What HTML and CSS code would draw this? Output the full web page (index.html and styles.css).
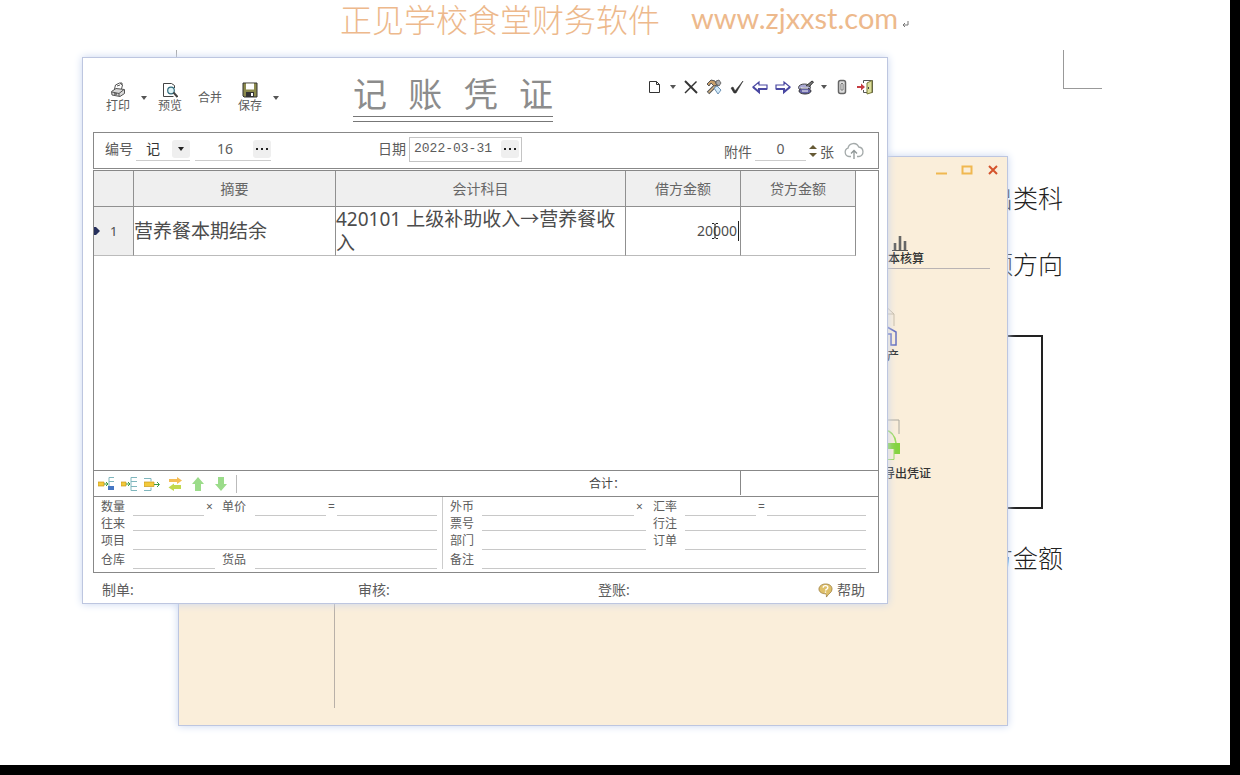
FILE: index.html
```html
<!DOCTYPE html>
<html lang="zh-CN">
<head>
<meta charset="utf-8">
<title>记账凭证</title>
<link rel="stylesheet" href="styles.css">
</head>
<body>
<svg class="defs" aria-hidden="true">
  <symbol id="caret" viewBox="0 0 6 4"><path d="M0 0h6L3 4z" fill="#555"/></symbol>
  <symbol id="dots" viewBox="0 0 18 18"><path d="M3 8h2v2H3zM8 8h2v2H8zM13 8h2v2h-2z" fill="#222"/></symbol>
</svg>
<div class="desktop">
  <article class="doc">
    <header class="banner"><span class="banner-name">正见学校食堂财务软件</span><span class="banner-url">www.zjxxst.com</span><svg class="ret" viewBox="0 0 8 8"><path d="M7 1v4H2M4 3L2 5l2 2" fill="none" stroke="#777"/></svg></header>
    <div class="crop-marks"><i class="mark-left"></i><i class="mark-right"></i></div>
    <div class="doc-body">
      <p>出类科</p>
      <p>额方向</p>
      <div class="doc-box"></div>
      <p>方金额</p>
    </div>
  </article>

  <section class="window main-window">
    <div class="side"></div>
    <div class="main-content">
      <div class="win-controls">
        <button aria-label="最小化"><svg viewBox="0 0 12 12"><path d="M1 9.500h11" stroke="#f0b850" stroke-width="2"/></svg></button>
        <button aria-label="最大化"><svg viewBox="0 0 12 12"><path d="M1.500 2.500h9v7h-9z" fill="none" stroke="#f0b850" stroke-width="2"/></svg></button>
        <button aria-label="关闭"><svg viewBox="0 0 12 12"><path d="M2 2l8 8M10 2l-8 8" stroke="#d4532c" stroke-width="2"/></svg></button>
      </div>
      <div class="nav"><button class="nav-item"><svg class="bars" viewBox="0 0 16 16"><path d="M3 15V8M8 15V1M13 15V6" stroke="#666" stroke-width="2.600" fill="none"/><path d="M0 15.500h16" stroke="#555"/></svg>成本核算</button></div>
      <div class="tiles">
        <button class="tile asset"><svg viewBox="0 0 48 48"><path d="M8 46V16L24 4l12 11v12M12 15h24" fill="none" stroke="#c9bda8"/><path d="M4 36L22 24l16 9v13h-5V35h-8" fill="none" stroke="#6670c0" stroke-width="1.500"/></svg>固定资产</button>
        <button class="tile export"><svg viewBox="0 0 48 48"><path d="M4 8h36v14" fill="none" stroke="#aaa89e"/><path d="M26 18c6 1 10 6 11 13" fill="none" stroke="#9ada5e" stroke-width="1.500"/><path d="M22 31h19v11h-6v-5H22z" fill="#85d33f"/><path d="M18 47.500h17V37" fill="none" stroke="#9ada5e"/></svg>导出凭证</button>
      </div>
    </div>
  </section>

  <section class="window voucher">
    <header class="voucher-head">
      <div class="commands">
        <button class="cmd"><svg viewBox="0 0 16 16"><path d="M4.500 7l1-4 4-2 3 2-1 4" fill="#fff" stroke="#555"/><path d="M1.500 9.500L6 6.500l8.500 1v4L10 14.500l-8-1.500z" fill="#d8d8d8" stroke="#555"/><path d="M2 10l7 1.500 5-4M9 11.500V14M7 4l3-1M10 1h2v2" stroke="#555" fill="none"/><path d="M4 12h3" stroke="#222"/></svg>打印</button>
        <button class="drop" aria-label="打印选项"><svg class="caret"><use href="#caret"/></svg></button>
        <button class="cmd"><svg viewBox="0 0 16 16"><path d="M12.500 6V3.500l-3-2h-8v13h10" fill="#fff" stroke="#444"/><circle cx="9" cy="8.500" r="3.300" fill="#dff3f6" stroke="#316b7c" stroke-width="1.200"/><path d="M11.500 10.500l4 4.500" stroke="#444" stroke-width="2"/></svg>预览</button>
        <button class="cmd">合并</button>
        <button class="cmd"><svg viewBox="0 0 16 16"><path d="M1 1h14v14H2l-1-1z" fill="#8c8a4c" stroke="#333"/><path d="M4 1.500h8v6H4z" fill="#fff"/><path d="M4 10h8v5H4z" fill="#333"/><path d="M9 11h2v3H9z" fill="#fff"/></svg>保存</button>
        <button class="drop" aria-label="保存选项"><svg class="caret"><use href="#caret"/></svg></button>
      </div>
      <h1 class="title"><span>记</span><span>账</span><span>凭</span><span>证</span></h1>
      <div class="tools">
        <button aria-label="新建"><svg viewBox="0 0 16 16"><path d="M2.500 2.500h7l3 3v8h-10z" fill="#fff" stroke="#333"/><path d="M9.500 2.500v3h3" fill="none" stroke="#333"/></svg></button>
        <button class="drop" aria-label="新建选项"><svg class="caret"><use href="#caret"/></svg></button>
        <button aria-label="删除"><svg viewBox="0 0 16 16"><path d="M2 2l12 12" stroke="#333" stroke-width="2"/><path d="M13.500 2.500L2 14" stroke="#333" stroke-width="1.500"/></svg></button>
        <button aria-label="修改"><svg viewBox="0 0 16 16"><path d="M13 3L2 14" stroke="#555" stroke-width="3.500"/><path d="M13 3L2.500 13.500" stroke="#d9b98a" stroke-width="1.500"/><path d="M1 5l4-4 4 1 2 4-3 1-3-3-2 3z" fill="#c8a06c" stroke="#555"/><path d="M10 2l3-1 2 3-2 3-3-2z" fill="#aaa" stroke="#555" stroke-width=".8"/><path d="M8 9l3-2 4 4-3 4z" fill="#d4ebfa" stroke="#6d92b5"/></svg></button>
        <button aria-label="审核"><svg viewBox="0 0 16 16"><path d="M2 9l2-1 2 4 8-10-7 12H5z" fill="#333" stroke="#333" stroke-width=".6"/></svg></button>
        <button aria-label="上一张"><svg viewBox="0 0 16 16"><path d="M1 8l6-5v3h8v4H7v3z" fill="#fff" stroke="#4a48a2" stroke-width="1.200"/><path d="M1 8l6 5v-3h8" fill="none" stroke="#4a48a2" stroke-width="2"/></svg></button>
        <button aria-label="下一张"><svg viewBox="0 0 16 16"><path d="M15 8L9 3v3H1v4h8v3z" fill="#fff" stroke="#4a48a2" stroke-width="1.200"/><path d="M15 8l-6 5v-3H1" fill="none" stroke="#4a48a2" stroke-width="2"/></svg></button>
        <button aria-label="查找"><svg viewBox="0 0 16 16"><ellipse cx="6.500" cy="8.500" rx="6" ry="3.500" fill="#aaa9d4" stroke="#444"/><ellipse cx="7" cy="12" rx="6" ry="3" fill="#6664a8" stroke="#333"/><path d="M3 9h7M4 12h6" stroke="#fff"/><path d="M8 7l6-5 1.500 1L11 8" fill="#777" stroke="#333"/></svg></button>
        <button class="drop" aria-label="查找选项"><svg class="caret"><use href="#caret"/></svg></button>
        <button aria-label="附件"><svg viewBox="0 0 16 16"><rect x="4.500" y="1.500" width="7" height="13" rx="2" fill="#ddd" stroke="#666" stroke-width="1.500"/><path d="M7 11V5q1-2 2 0v6H7" fill="#fff" stroke="#777"/></svg></button>
        <button aria-label="退出"><svg viewBox="0 0 16 16"><path d="M6.500 4V1.500h9v12h-9V11" fill="#fff" stroke="#555"/><path d="M10 4l5-2.500v12L10 15z" fill="#dddf9c" stroke="#777837"/><path d="M0 7h4V4.500L8 8l-4 3.500V9H0z" fill="#c63d42"/><path d="M11.500 8v2" stroke="#444"/></svg></button>
      </div>
    </header>

    <div class="info">
      <div class="group">
        <label for="kind">编号</label>
        <span class="overlay"><select id="kind"><option>记</option></select><svg class="mini" viewBox="0 0 18 18"><path d="M6 7h6l-3 4z" fill="#222"/></svg></span>
        <span class="overlay number"><input aria-label="凭证号" value="16"><button class="mini" aria-label="选择编号"><svg><use href="#dots"/></svg></button></span>
      </div>
      <div class="group date-group">
        <label for="date">日期</label>
        <span class="date"><input id="date" value="2022-03-31"><button class="mini" aria-label="选择日期"><svg><use href="#dots"/></svg></button></span>
      </div>
      <div class="group">
        <label class="low" for="att">附件</label>
        <input class="att" id="att" value="0">
        <svg class="spin" viewBox="0 0 8 14"><path d="M0 5h8L4 1zM0 9h8l-4 4z" fill="#665a35"/></svg>
        <span class="low">张</span>
        <button class="cloud" aria-label="上传附件"><svg viewBox="0 0 20 20"><path d="M7 15.500H5A4.300 4.300 0 0 1 4 7.200 5.600 5.600 0 0 1 14.700 6 4.800 4.800 0 0 1 15 15.500h-2" fill="none" stroke="#a4aaaa" stroke-width="1.300"/><path d="M10 18v-8M7 12.500L10 9.500l3 3" fill="none" stroke="#8f9696" stroke-width="1.300"/></svg></button>
      </div>
    </div>

    <div class="entries">
      <table>
        <colgroup><col class="c-no"><col class="c-note"><col><col class="c-sum"><col class="c-sum"></colgroup>
        <thead><tr><th></th><th>摘要</th><th>会计科目</th><th>借方金额</th><th>贷方金额</th></tr></thead>
        <tbody><tr>
          <td class="no"><div><svg viewBox="0 0 6 8"><path d="M0 0h2l4 4-4 4H0z" fill="#27305c"/></svg><span>1</span></div></td>
          <td>营养餐本期结余</td>
          <td>420101 上级补助收入→营养餐收入</td>
          <td class="amount"><input aria-label="借方金额" value="20000"><svg class="ibeam" viewBox="0 0 8 16"><path d="M1 .5h2l1 1 1-1h2M4 1v14M1 15.500h2l1-1 1 1h2" fill="none" stroke="#222"/></svg></td>
          <td></td>
        </tr></tbody>
      </table>
    </div>

    <div class="rowbar">
      <div class="row-tools">
        <button aria-label="插入行"><svg viewBox="0 0 16 16"><path d="M0 6h6v4H0z" fill="#f3c93b" stroke="#c89a1c" stroke-width=".7"/><path d="M6 8h4M8 6l2 2-2 2" stroke="#3a9a45" fill="none"/><path d="M16 1.500h-5v12M11 5.500h5" stroke="#7fb6bd" fill="none"/><path d="M10 10h6v4h-6z" fill="#4576c4"/></svg></button>
        <button aria-label="追加行"><svg viewBox="0 0 16 16"><path d="M0 6h5v4H0z" fill="#f3c93b" stroke="#c89a1c" stroke-width=".7"/><path d="M5 8h4M7 6l2 2-2 2" stroke="#3a9a45" fill="none"/><path d="M16 1.500h-6v13h6M10 5.500h6M10 10.500h6" stroke="#7fb6bd" fill="none"/></svg></button>
        <button aria-label="删除行"><svg viewBox="0 0 16 16"><path d="M0 2.500h7v3M0 14.500h7v-3" stroke="#7fb6bd" fill="none"/><path d="M0 6h10v4.500H0z" fill="#f3c93b" stroke="#c89a1c" stroke-width=".7"/><path d="M10 8.500h5M13 6l2.500 2.500L13 11" stroke="#3a9a45" fill="none"/></svg></button>
        <button aria-label="交换"><svg viewBox="0 0 16 16"><path d="M2 3h8V1l5 3.500L10 8V6H2z" fill="#f5bd55"/><path d="M14 9H7V7.500L1.500 11.500 7 15v-2h7z" fill="#c2d94e"/></svg></button>
        <button aria-label="上移"><svg viewBox="0 0 16 16"><path d="M8 1l6 7h-3v7H5V8H2z" fill="#9bdc8a"/></svg></button>
        <button aria-label="下移"><svg viewBox="0 0 16 16"><path d="M8 15L2 8h3V1h6v7h3z" fill="#9bdc8a"/></svg></button>
        <i class="sep"></i>
      </div>
      <div class="total-label">合计：</div>
      <div class="total"></div>
    </div>

    <div class="fields">
      <div class="pane pane-left">
        <label for="f1">数量</label><input id="f1"><span>×</span><label for="f2">单价</label><input id="f2"><span>=</span><input aria-label="金额">
        <label class="tight" for="f3">往来</label><input class="full" id="f3">
        <label for="f4">项目</label><input class="full" id="f4">
        <label for="f5">仓库</label><input class="two" id="f5"><label for="f6">货品</label><input class="rest" id="f6">
      </div>
      <div class="pane pane-right">
        <label for="g1">外币</label><input id="g1"><span>×</span><label for="g2">汇率</label><input id="g2"><span>=</span><input aria-label="本位币">
        <label class="tight" for="g3">票号</label><input class="two" id="g3"><label class="tight" for="g4">行注</label><input class="rest" id="g4">
        <label for="g5">部门</label><input class="two" id="g5"><label for="g6">订单</label><input class="rest" id="g6">
        <label for="g7">备注</label><input class="full" id="g7">
      </div>
    </div>

    <footer class="voucher-foot">
      <span>制单:</span><span>审核:</span><span>登账:</span>
      <button class="help"><svg viewBox="0 0 16 16"><path d="M8 1c4 0 7 2 7 5.500 0 4-4 4.500-6 8.500 0-2 0-3-1-3.500C4 11.500 1 9.500 1 6.500S4 1 8 1z" fill="#dfc06a" stroke="#9a7b3c" stroke-width=".8"/><path d="M5.500 5c0-3 5-3 5 0 0 1.500-2 1.500-2.500 3M8 9v1.500" fill="none" stroke="#fff" stroke-width="1.400"/></svg>帮助</button>
    </footer>
  </section>
</div>
</body>
</html>
```
FILE: styles.css
```css
* { box-sizing: border-box; }
html, body { height: 100%; }
body {
  margin: 0;
  padding: 0 10px 10px 0;
  background: #000;
  color: #5c5c5c;
  font: 14px/20px "Noto Sans", "Noto Sans CJK SC", sans-serif;
}
button, input, select { font: inherit; color: inherit; border: 0; padding: 0; margin: 0; background: none; outline: 0; border-radius: 0; }
input { min-width: 0; width: 100%; }
button { display: flex; align-items: center; justify-content: center; cursor: pointer; }
svg { display: block; flex: none; }
.defs { position: absolute; width: 0; height: 0; }
.desktop { position: relative; height: 100%; overflow: hidden; background: #fff; }

/* Document behind the windows */
.banner { display: flex; align-items: center; height: 50px; padding: 0 0 14px 340px; color: #edb98c; white-space: nowrap; }
.banner-name { font: 300 32px/36px "Noto Sans CJK SC", sans-serif; }
.banner-url { margin-left: 31px; font: 29px/36px Lato, "Open Sans", sans-serif; }
.ret { width: 8px; height: 8px; margin: 12px 0 0 3px; }
.crop-marks { display: flex; justify-content: space-between; height: 39px; padding-right: 128px; }
.mark-left { width: 177px; border-right: 1px solid #aaa; }
.mark-right { width: 39px; border: solid #999; border-width: 0 0 1px 1px; }
.doc-body { padding: 75px 0 0 988px; color: #222; font: 300 25px/66px "Noto Sans CJK SC", sans-serif; }
.doc-body p { margin: 0; }
.doc-box { width: 55px; height: 174px; margin: 39px 0 15px; border: 2px solid #222; }

/* Windows */
.window { position: absolute; border: 1px solid #bdc6e0; box-shadow: 0 0 8px #c9d6f0; }
.main-window { left: 178px; top: 156px; width: 830px; height: 570px; display: flex; background: #faeeda; color: #333; font-size: 12px; line-height: 14px; }
.side { width: 156px; margin-bottom: 17px; border-right: 1px solid #b8b0a8; }
.main-content { flex: 1; padding: 7px 17px 0 0; }
.win-controls { display: flex; justify-content: flex-end; gap: 14px; margin-right: -9px; }
.win-controls svg { width: 12px; height: 12px; }
.nav { display: flex; justify-content: flex-end; height: 93px; padding-right: 66px; border-bottom: 1px solid #b9b3b3; }
.nav-item, .tile { flex-direction: column; justify-content: flex-end; font-weight: 500; }
.nav-item { padding-bottom: 2px; }
.bars { width: 16px; height: 16px; margin-bottom: 1px; }
.tiles { display: flex; flex-direction: column; align-items: flex-end; gap: 49px; padding: 30px 35px 0 0; }
.tile svg { width: 48px; height: 48px; }
.asset { margin-right: 56px; }
.asset svg { margin: 0 -14px 2px 0; }
.export { width: 96px; }
.export svg { align-self: flex-start; margin-bottom: 7px; }

.voucher { left: 82px; top: 57px; width: 806px; height: 547px; display: flex; flex-direction: column; padding: 0 8px 0 10px; background: #fff; }
.voucher-head { display: grid; grid-template-columns: 260px auto 1fr; height: 74px; align-items: start; }
.commands { display: flex; align-items: center; gap: 11px; padding: 24px 0 0 13px; font-size: 12px; line-height: 15px; }
.cmd { flex-direction: column; }
.cmd + .cmd { margin-left: 5px; }
.cmd svg, .tools svg { width: 16px; height: 16px; }
.drop .caret { width: 6px; height: 4px; }
.title { display: flex; justify-content: space-between; position: relative; width: 200px; height: 64px; margin: 0; padding-top: 16px; border-bottom: 1px solid #777; color: #8c8c8c; font: 400 34px/38px "Noto Sans CJK SC", sans-serif; }
.title::after { content: ""; position: absolute; left: 0; right: 0; bottom: 4px; border-top: 1px solid #777; }
.tools { display: flex; justify-content: flex-end; gap: 7px; padding: 21px 6px 0 0; }

.info { display: grid; grid-template-columns: 273px 1fr auto; align-items: center; height: 37px; padding: 0 14px 3px 11px; border: 1px solid #888; }
.group { display: flex; align-items: center; gap: 3px; }
.low { padding-top: 5px; }
.overlay { display: grid; align-items: center; width: 54px; height: 24px; border-bottom: 1px solid #ccc; }
.overlay > * { grid-area: 1 / 1; }
.overlay select { width: 100%; padding-left: 10px; appearance: none; color: #333; }
.mini { width: 18px; height: 18px; border-radius: 3px; background: #efefef; justify-self: end; pointer-events: none; }
button.mini { pointer-events: auto; }
.mini svg { width: 18px; height: 18px; }
.number { width: 76px; margin-left: 2px; }
.number input { padding-right: 16px; text-align: center; }
.date { display: flex; align-items: center; width: 113px; height: 25px; padding: 0 2px 0 4px; border: 1px solid #c4c4c4; }
.date input { font: 13px/20px "Liberation Mono", monospace; }
.att { width: 51px; height: 24px; border-bottom: 1px solid #ccc; text-align: center; }
.spin { width: 8px; height: 14px; margin-top: 4px; }
.cloud { margin-left: 7px; }
.cloud svg { width: 20px; height: 20px; margin-top: 3px; }

.entries { flex: 1; margin-top: 1px; padding-right: 22px; border: solid #888; border-width: 1px 1px 0; }
table { width: 100%; border-collapse: separate; border-spacing: 0; table-layout: fixed; }
.c-no { width: 40px; }
.c-note { width: 202px; }
.c-sum { width: 115px; }
th, td { padding: 0; border: solid #909090; border-width: 0 1px 1px 0; }
th { height: 36px; background: #efefef; color: #666; font-weight: 400; }
td { height: 49px; color: #4c4c4c; font-size: 19px; line-height: 24px; border-bottom-color: #bbb; }
.no { background: #efefef; font-size: 13px; }
.no div { display: flex; align-items: center; gap: 10px; }
.no svg { width: 6px; height: 8px; }
.amount { position: relative; font-size: 14px; }
.amount input { display: block; height: 20px; padding-right: 1px; border-right: 1px solid #222; text-align: right; width: calc(100% - 1px); }
.ibeam { position: absolute; right: 21px; top: 16px; width: 8px; height: 16px; }

.rowbar { display: grid; grid-template-columns: 1fr 151px 138px; height: 26px; border: solid #888; border-width: 1px 1px 0; }
.row-tools { display: flex; align-items: center; gap: 7px; padding-left: 4px; }
.row-tools svg { width: 16px; height: 16px; }
.sep { height: 18px; border-left: 1px solid #bbb; }
.total-label { font-size: 12px; line-height: 25px; color: #444; }
.total { margin-bottom: 1px; border-left: 1px solid #888; }

.fields { display: grid; grid-template-columns: 349fr 435fr; height: 77px; padding-bottom: 3px; border: 1px solid #888; font-size: 12px; }
.pane { display: grid; grid-template-rows: 19px 15px 19px 19px; padding-left: 7px; line-height: 19px; }
.pane-left { grid-template-columns: 32px 71px 18px 33px 71px 11px 1fr; padding-right: 5px; border-right: 1px solid #ccc; }
.pane-right { grid-template-columns: 32px 1fr 19px 32px 71px 11px 99px; padding-right: 12px; }
.pane input { border-bottom: 1px solid #c8c8c8; }
.pane span { padding-left: 2px; }
.full { grid-column: 2 / -1; }
.two { grid-column: 2 / 4; }
.pane .two { width: calc(100% - 7px); }
.rest { grid-column: 5 / -1; }
.tight { line-height: 15px; }

.voucher-foot { display: grid; grid-template-columns: 256px 240px 1fr auto; align-items: center; height: 30px; padding: 4px 14px 0 9px; }
.help { gap: 4px; }
.help svg { width: 15px; height: 15px; }
```
